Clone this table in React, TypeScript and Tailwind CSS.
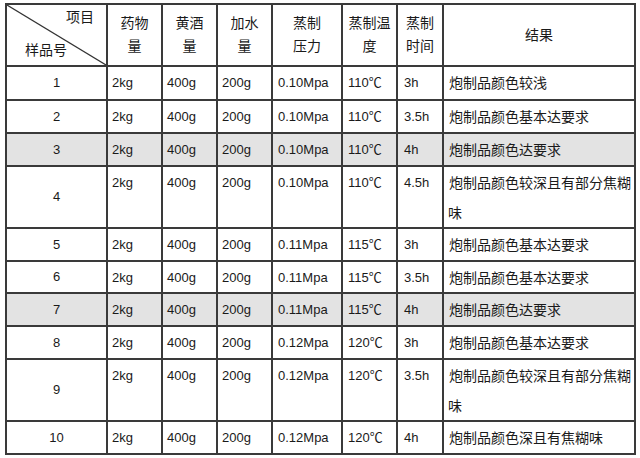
import React from "react";

const rows: { n: string; p: string; t: string; h: string; r: string; gray?: boolean; tall?: boolean }[] = [
  { n: "1", p: "0.10Mpa", t: "110", h: "3h", r: "炮制品颜色较浅" },
  { n: "2", p: "0.10Mpa", t: "110", h: "3.5h", r: "炮制品颜色基本达要求" },
  { n: "3", p: "0.10Mpa", t: "110", h: "4h", r: "炮制品颜色达要求", gray: true },
  { n: "4", p: "0.10Mpa", t: "110", h: "4.5h", r: "炮制品颜色较深且有部分焦糊味", tall: true },
  { n: "5", p: "0.11Mpa", t: "115", h: "3h", r: "炮制品颜色基本达要求" },
  { n: "6", p: "0.11Mpa", t: "115", h: "3.5h", r: "炮制品颜色基本达要求" },
  { n: "7", p: "0.11Mpa", t: "115", h: "4h", r: "炮制品颜色达要求", gray: true },
  { n: "8", p: "0.12Mpa", t: "120", h: "3h", r: "炮制品颜色基本达要求" },
  { n: "9", p: "0.12Mpa", t: "120", h: "3.5h", r: "炮制品颜色较深且有部分焦糊味", tall: true },
  { n: "10", p: "0.12Mpa", t: "120", h: "4h", r: "炮制品颜色深且有焦糊味" },
];

const font = { fontFamily: '"Liberation Sans", "Noto Sans CJK SC", sans-serif' };

function H({ a, b }: { a: string; b: string }) {
  return (
    <div className="border-r-2 border-b-2 border-[#3a3a3a] flex flex-col items-center justify-center text-[14px] leading-[23px] text-[#1a1a1a]">
      <div>{a}</div>
      <div>{b}</div>
    </div>
  );
}

function D({ children, gray, cjk }: { children: React.ReactNode; gray?: boolean; cjk?: boolean }) {
  return (
    <div
      className={`border-r-2 border-b-2 border-[#3a3a3a] pl-[4px] pt-[1px] leading-[30px] text-[#1a1a1a] ${cjk ? "text-[14px]" : "text-[13px]"} ${gray ? "bg-[#e3e3e3]" : "bg-white"}`}
    >
      {children}
    </div>
  );
}

export default function App() {
  return (
    <div className="w-[640px] h-[458px] bg-white overflow-hidden" style={font}>
      <div className="ml-[5px] mt-[3px] w-max border-t-2 border-l-2 border-[#3a3a3a] grid grid-cols-[101px_55px_55px_55px_70px_55px_46px_192px] grid-rows-[62px_34px_33px_33px_62px_33px_32px_33px_33px_62px_33px]">
        <div className="relative border-r-2 border-b-2 border-[#3a3a3a] flex flex-col text-[14px] leading-[24px] text-[#1a1a1a]">
          <svg className="absolute inset-0 w-full h-full" preserveAspectRatio="none" viewBox="0 0 100 60">
            <line x1="0" y1="0" x2="100" y2="60" stroke="#333" strokeWidth="1.2" vectorEffect="non-scaling-stroke" />
          </svg>
          <div className="self-end pr-[12px]">项目</div>
          <div className="pl-[18px] mt-[9px]">样品号</div>
        </div>
        <H a="药物" b="量" />
        <H a="黄酒" b="量" />
        <H a="加水" b="量" />
        <H a="蒸制" b="压力" />
        <H a="蒸制温" b="度" />
        <H a="蒸制" b="时间" />
        <div className="border-r-2 border-b-2 border-[#3a3a3a] flex items-center justify-center text-[14px] text-[#1a1a1a]">结果</div>
        {rows.map((r) => (
          <React.Fragment key={r.n}>
            <div
              className={`border-r-2 border-b-2 border-[#3a3a3a] flex items-center justify-center text-[13px] text-[#1a1a1a] ${r.gray ? "bg-[#e3e3e3]" : "bg-white"}`}
            >
              {r.n}
            </div>
            <D gray={r.gray}>2kg</D>
            <D gray={r.gray}>400g</D>
            <D gray={r.gray}>200g</D>
            <D gray={r.gray}>
              <span className="pl-[1px]">{r.p}</span>
            </D>
            <D gray={r.gray}>
              <span className="pl-[1px]">
                {r.t}
                <span className="font-['Noto_Sans_CJK_SC',sans-serif] text-[13px] leading-none">℃</span>
              </span>
            </D>
            <D gray={r.gray}>
              <span className="pl-[2px]">{r.h}</span>
            </D>
            <D gray={r.gray} cjk>
              <span className="pl-[1px]">{r.r}</span>
            </D>
          </React.Fragment>
        ))}
      </div>
    </div>
  );
}
